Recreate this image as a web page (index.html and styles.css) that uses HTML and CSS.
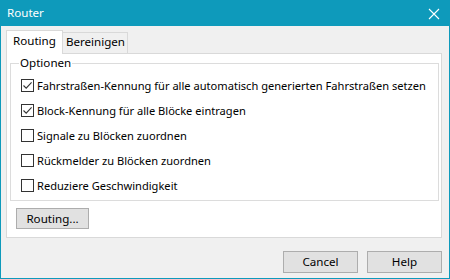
FILE: index.html
```html
<!DOCTYPE html>
<html lang="de">
<head>
<meta charset="utf-8">
<title>Router</title>
<link rel="stylesheet" href="styles.css">
</head>
<body>
<div class="window">
  <div class="titlebar">
    <span class="title">Router</span>
    <svg class="close" width="12" height="12" viewBox="0 0 12 12"><path d="M1 1 L11 11 M11 1 L1 11" stroke="#fff" stroke-width="1.1" fill="none"/></svg>
  </div>
  <div class="content">
    <div class="tabs">
      <div class="tab active">Routing</div>
      <div class="tab">Bereinigen</div>
    </div>
    <div class="panel">
      <fieldset class="group">
        <legend>Optionen</legend>
        <div class="rows">
          <label class="row"><span class="cb checked"><svg width="11" height="11" viewBox="0 0 11 11"><path d="M1.5 5.5 L4.2 8.2 L9.6 2.4" stroke="#333" stroke-width="1.1" fill="none"/></svg></span>Fahrstraßen-Kennung für alle automatisch generierten Fahrstraßen setzen</label>
          <label class="row"><span class="cb checked"><svg width="11" height="11" viewBox="0 0 11 11"><path d="M1.5 5.5 L4.2 8.2 L9.6 2.4" stroke="#333" stroke-width="1.1" fill="none"/></svg></span>Block-Kennung für alle Blöcke eintragen</label>
          <label class="row"><span class="cb"></span>Signale zu Blöcken zuordnen</label>
          <label class="row"><span class="cb"></span>Rückmelder zu Blöcken zuordnen</label>
          <label class="row"><span class="cb"></span>Reduziere Geschwindigkeit</label>
        </div>
      </fieldset>
      <button class="btn routing">Routing...</button>
    </div>
    <div class="footer">
      <button class="btn">Cancel</button>
      <button class="btn">Help</button>
    </div>
  </div>
</div>
</body>
</html>
```

FILE: styles.css
```css
* { box-sizing: border-box; }
html, body { margin: 0; padding: 0; }
body {
  font-family: "Noto Sans", "Open Sans", sans-serif;
  font-size: 11.1px;
  color: #000;
  background: #f0f0f0;
}
.window {
  width: 450px;
  height: 279px;
  border: 1px solid #0e9abb;
  border-top: none;
  background: #f0f0f0;
  display: flex;
  flex-direction: column;
}
.titlebar {
  height: 26px;
  margin: 0 -1px;
  background: #0e9abb;
  color: #fff;
  display: flex;
  align-items: center;
  justify-content: space-between;
  padding: 0 10px 0 7px;
  font-size: 11.6px;
}
.title { line-height: 16px; padding-bottom: 1px; }
.close { display: block; margin-top: 1px; }
.content {
  flex: 1;
  display: flex;
  flex-direction: column;
  padding: 4px 7px 5px 5px;
}
.tabs {
  display: flex;
  align-items: flex-end;
  height: 23px;
  font-size: 11.6px;
}
.tab {
  height: 21px;
  line-height: 18px;
  padding: 0 2px 0 3px;
  border: 1px solid #d9d9d9;
  border-bottom: none;
  background: #f0f0f0;
  margin-left: -1px;
}
.tab.active {
  height: 24px;
  margin-left: 0;
  margin-bottom: -1px;
  background: #fff;
  padding: 0 6px;
  line-height: 20px;
  position: relative;
  z-index: 1;
}
.panel {
  height: 185px;
  width: 436px;
  border: 1px solid #d9d9d9;
  background: #fff;
  padding: 0 2px 0 3px;
  display: flex;
  flex-direction: column;
  align-items: flex-start;
}
.group {
  margin: 1px 0 0 0;
  padding: 0 0 6px 0;
  border: 1px solid #dcdcdc;
  width: 100%;
  min-width: 0;
}
.group legend {
  margin-left: 8px;
  padding: 0 1px;
  line-height: 16px;
  font-size: 11.6px;
}
.rows {
  display: flex;
  flex-direction: column;
  gap: 8px;
  padding-top: 6px;
}
.row {
  display: flex;
  align-items: center;
  height: 17px;
  padding-left: 10px;
  white-space: nowrap;
}
.cb {
  width: 13px;
  height: 13px;
  border: 1px solid #333;
  background: #fff;
  margin-right: 3px;
  display: flex;
  align-items: center;
  justify-content: center;
}
.cb svg { display: block; }
.btn {
  font: inherit;
  font-size: 11.6px;
  color: #000;
  background: #e1e1e1;
  border: 1px solid #adadad;
  height: 22px;
  width: 75px;
  padding: 0;
  line-height: 18px;
}
.btn.routing {
  margin: 7px 0 0 6px;
  width: 73px;
  height: 21px;
}
.footer {
  display: flex;
  justify-content: flex-end;
  gap: 9px;
  margin-top: 13px;
}
```
